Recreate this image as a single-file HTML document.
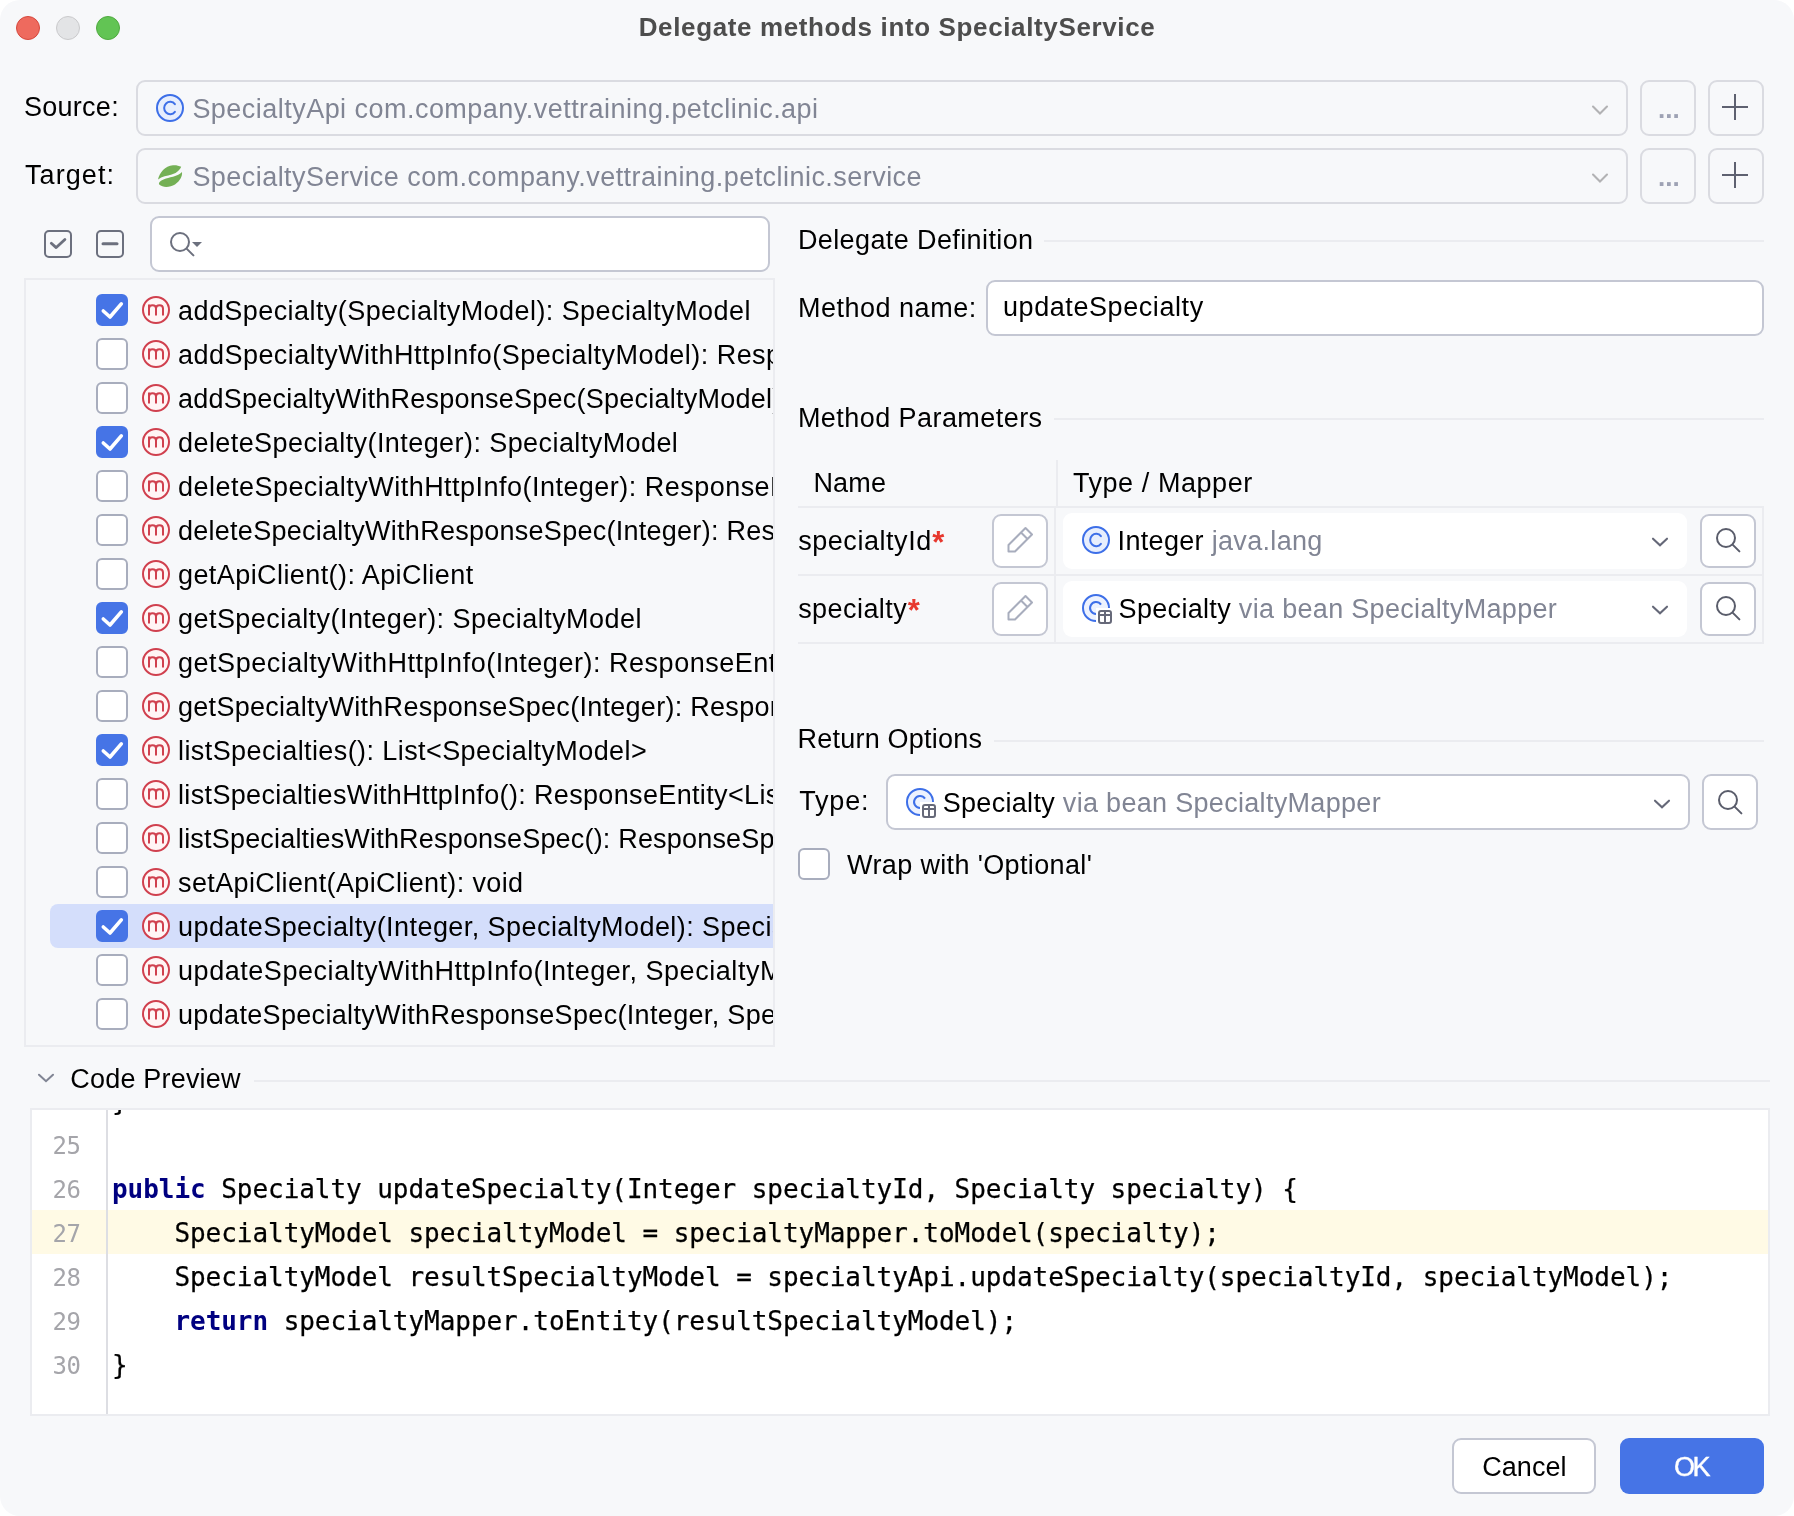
<!DOCTYPE html>
<html><head><meta charset="utf-8"><title>Delegate methods into SpecialtyService</title>
<style>
*{box-sizing:border-box;margin:0;padding:0}
html,body{width:1794px;height:1516px;background:#fff;overflow:hidden}
body{font-family:"Liberation Sans",sans-serif;font-size:27px;color:#000;position:relative}
#win{position:absolute;left:0;top:0;width:1794px;height:1516px;background:#f7f8fa;border-radius:20px;overflow:hidden}
#ly{position:absolute;left:0;top:0;width:1794px;height:1516px;will-change:transform}
.a{position:absolute;white-space:nowrap}
.t{position:absolute;white-space:nowrap;line-height:32px;height:32px}
.g{color:#818594}
.ast{color:#e7382e;font-size:31px;font-weight:bold;line-height:0;vertical-align:-2.5px;letter-spacing:0;margin-left:0.5px}
.dot{position:absolute;width:24px;height:24px;border-radius:50%;top:16px}
.combo{position:absolute;border:2px solid #dadbe1;border-radius:9px;background:#f7f8fa}
.btn{position:absolute;border:2px solid #dadbe1;border-radius:9px;background:#f7f8fa}
.wbtn{position:absolute;border:2px solid #c4c7d3;border-radius:9px;background:#fff}
.field{position:absolute;border:2px solid #c4c7d3;border-radius:9px;background:#fff}
.hl{position:absolute;height:2px;background:#ebecf0}
.vl{position:absolute;width:2px;background:#ebecf0}
svg{position:absolute;overflow:visible}
.row{position:absolute;left:0;width:750px;height:44px}
.sel{position:absolute;left:26px;top:0;width:730px;height:44px;background:#d4defb;border-radius:8px 0 0 8px}
.cb{position:absolute;left:72px;top:6px;width:32px;height:32px;border-radius:6px;border:2px solid #a8adbd;background:#fff}
.cb.on{background:#4674e6;border-color:#4674e6}
.row .t{left:154px;top:7px}
.mono{font-family:"DejaVu Sans Mono","Liberation Mono",monospace;font-size:26px}
.ln{position:absolute;left:0;width:48.8px;text-align:right;color:#a5a5aa;line-height:44px;height:44px;font-size:24px;letter-spacing:-0.25px;margin-top:1px}
.cl{position:absolute;left:80px;line-height:44px;height:44px;white-space:pre;color:#000;letter-spacing:-0.05px;-webkit-text-stroke:0.25px #000}
.kw{color:#000080;font-weight:bold;-webkit-text-stroke:0}
</style></head><body>
<div id="win"><div id="ly">
<div class="dot" style="left:16px;background:#ee6a5e;border:1px solid #d5473c"></div>
<div class="dot" style="left:56px;background:#e3e4e6;border:1px solid #c9c9cb"></div>
<div class="dot" style="left:96px;background:#62c454;border:1px solid #4fa93f"></div>
<div class="t" id="title" style="left:638.7px;top:11px;font-weight:bold;font-size:26px;color:#4d4d4d;letter-spacing:0.63px">Delegate methods into SpecialtyService</div>

<div class="t" id="lsrc" style="left:24.0px;top:91px;;letter-spacing:0.267px">Source:</div>
<div class="combo" style="left:136px;top:80px;width:1492px;height:56px"></div>
<svg style="left:154px;top:92px" width="32" height="32" viewBox="0 0 32 32"><circle cx="16" cy="16" r="13" fill="#e7eefd" stroke="#3d6fe8" stroke-width="2"/><path d="M20.9 12.2A6 6.2 0 1 0 20.9 19.8" fill="none" stroke="#3d6fe8" stroke-width="2" stroke-linecap="round"/></svg>
<div class="t g" id="tsrc" style="left:192.4px;top:92.5px;;letter-spacing:0.467px">SpecialtyApi com.company.vettraining.petclinic.api</div>
<svg style="left:1590px;top:100px" width="20" height="20" viewBox="0 0 20 20"><path d="M3 6.5L10 13.5L17 6.5" fill="none" stroke="#b2b2b4" stroke-width="2.1" stroke-linecap="round" stroke-linejoin="miter"/></svg>
<div class="btn" style="left:1640px;top:80px;width:56px;height:56px"></div>
<div class="t" id="d1" style="left:1658px;top:93px;font-weight:bold;font-size:26px;color:#9ea2b4">...</div>
<div class="btn" style="left:1708px;top:80px;width:56px;height:56px"></div>
<svg style="left:1719px;top:91px" width="32" height="32" viewBox="0 0 32 32"><path d="M16 3V29M3 16H29" stroke="#5e6170" stroke-width="2" fill="none"/></svg>
<div class="t" id="ltgt" style="left:25.0px;top:159px;;letter-spacing:1.083px">Target:</div>
<div class="combo" style="left:136px;top:148px;width:1492px;height:56px"></div>
<svg style="left:154px;top:160px" width="32" height="32" viewBox="0 0 32 32"><path d="M4 19.4C5.5 13 11 5.5 19 5.2C22 5 25 5.6 27.2 6.8C25 11.5 21 13.6 17.7 14.6C13 16 8 16.5 4 19.4Z" fill="#74b055"/><path d="M5 23C7 19.5 12 18.3 19 16.7C23 15.7 26 14.3 28 12C28.6 16 26 21 21 24.5C16 27.5 9 28 5.2 24.6C4.9 24 4.9 23.5 5 23Z" fill="#74b055"/></svg>
<div class="t g" id="ttgt" style="left:192.4px;top:160.5px;;letter-spacing:0.454px">SpecialtyService com.company.vettraining.petclinic.service</div>
<svg style="left:1590px;top:168px" width="20" height="20" viewBox="0 0 20 20"><path d="M3 6.5L10 13.5L17 6.5" fill="none" stroke="#b2b2b4" stroke-width="2.1" stroke-linecap="round" stroke-linejoin="miter"/></svg>
<div class="btn" style="left:1640px;top:148px;width:56px;height:56px"></div>
<div class="t" id="d2" style="left:1658px;top:161px;font-weight:bold;font-size:26px;color:#9ea2b4">...</div>
<div class="btn" style="left:1708px;top:148px;width:56px;height:56px"></div>
<svg style="left:1719px;top:159px" width="32" height="32" viewBox="0 0 32 32"><path d="M16 3V29M3 16H29" stroke="#5e6170" stroke-width="2" fill="none"/></svg>

<svg style="left:44px;top:230px" width="28" height="28" viewBox="0 0 28 28"><rect x="1" y="1" width="26" height="26" rx="4" fill="none" stroke="#6c707e" stroke-width="2"/><path d="M7.3 13.3L12.2 17.6L20.9 9.5" fill="none" stroke="#6c707e" stroke-width="2.8" stroke-linecap="round" stroke-linejoin="round"/></svg>
<svg style="left:96px;top:230px" width="28" height="28" viewBox="0 0 28 28"><rect x="1" y="1" width="26" height="26" rx="4" fill="none" stroke="#6c707e" stroke-width="2"/><path d="M7 13.8H21" fill="none" stroke="#6c707e" stroke-width="3" stroke-linecap="round"/></svg>
<div class="field" style="left:150px;top:216px;width:620px;height:56px"></div>
<svg style="left:164px;top:226px" width="40" height="40" viewBox="0 0 40 40"><circle cx="16" cy="16" r="9" fill="none" stroke="#6c707e" stroke-width="2"/><path d="M22.6 22.6L29.4 29.4" stroke="#6c707e" stroke-width="2" stroke-linecap="round"/></svg>
<svg style="left:192px;top:242px" width="10" height="5" viewBox="0 0 10 5"><path d="M0 0H10L5 5Z" fill="#6c707e"/></svg>

<div id="list" class="a" style="left:24px;top:278px;width:751px;height:769px;border:2px solid #ebecf0;overflow:hidden">
<div id="rows" class="a" style="left:-2px;top:8px;width:751px">
<div class="row" style="top:0px"><div class="cb on"></div><svg style="left:72px;top:6px" width="32" height="32" viewBox="0 0 32 32"><path d="M7.3 17L14 23L25.3 9.9" fill="none" stroke="#fff" stroke-width="3.6" stroke-linecap="round" stroke-linejoin="round"/></svg><svg style="left:116px;top:6px" width="32" height="32" viewBox="0 0 32 32"><circle cx="16" cy="16" r="13" fill="#fff5f5" stroke="#d0404e" stroke-width="2"/><path d="M9 21.5V10.5M9 14.5C9 10 16 10 16 14.5V21.5M16 14.5C16 10 23 10 23 14.5V21.5" fill="none" stroke="#d0404e" stroke-width="2"/></svg><div class="t" id="r0" style="left:154.0px;letter-spacing:0.433px">addSpecialty(SpecialtyModel): SpecialtyModel</div></div>
<div class="row" style="top:44px"><div class="cb"></div><svg style="left:116px;top:6px" width="32" height="32" viewBox="0 0 32 32"><circle cx="16" cy="16" r="13" fill="#fff5f5" stroke="#d0404e" stroke-width="2"/><path d="M9 21.5V10.5M9 14.5C9 10 16 10 16 14.5V21.5M16 14.5C16 10 23 10 23 14.5V21.5" fill="none" stroke="#d0404e" stroke-width="2"/></svg><div class="t" id="r1" style="left:154.0px;letter-spacing:0.463px">addSpecialtyWithHttpInfo(SpecialtyModel): ResponseEntity&lt;SpecialtyModel&gt;</div></div>
<div class="row" style="top:88px"><div class="cb"></div><svg style="left:116px;top:6px" width="32" height="32" viewBox="0 0 32 32"><circle cx="16" cy="16" r="13" fill="#fff5f5" stroke="#d0404e" stroke-width="2"/><path d="M9 21.5V10.5M9 14.5C9 10 16 10 16 14.5V21.5M16 14.5C16 10 23 10 23 14.5V21.5" fill="none" stroke="#d0404e" stroke-width="2"/></svg><div class="t" id="r2" style="left:154.0px;letter-spacing:0.241px">addSpecialtyWithResponseSpec(SpecialtyModel): ResponseSpec</div></div>
<div class="row" style="top:132px"><div class="cb on"></div><svg style="left:72px;top:6px" width="32" height="32" viewBox="0 0 32 32"><path d="M7.3 17L14 23L25.3 9.9" fill="none" stroke="#fff" stroke-width="3.6" stroke-linecap="round" stroke-linejoin="round"/></svg><svg style="left:116px;top:6px" width="32" height="32" viewBox="0 0 32 32"><circle cx="16" cy="16" r="13" fill="#fff5f5" stroke="#d0404e" stroke-width="2"/><path d="M9 21.5V10.5M9 14.5C9 10 16 10 16 14.5V21.5M16 14.5C16 10 23 10 23 14.5V21.5" fill="none" stroke="#d0404e" stroke-width="2"/></svg><div class="t" id="r3" style="left:154.0px;letter-spacing:0.426px">deleteSpecialty(Integer): SpecialtyModel</div></div>
<div class="row" style="top:176px"><div class="cb"></div><svg style="left:116px;top:6px" width="32" height="32" viewBox="0 0 32 32"><circle cx="16" cy="16" r="13" fill="#fff5f5" stroke="#d0404e" stroke-width="2"/><path d="M9 21.5V10.5M9 14.5C9 10 16 10 16 14.5V21.5M16 14.5C16 10 23 10 23 14.5V21.5" fill="none" stroke="#d0404e" stroke-width="2"/></svg><div class="t" id="r4" style="left:154.0px;letter-spacing:0.474px">deleteSpecialtyWithHttpInfo(Integer): ResponseEntity&lt;SpecialtyModel&gt;</div></div>
<div class="row" style="top:220px"><div class="cb"></div><svg style="left:116px;top:6px" width="32" height="32" viewBox="0 0 32 32"><circle cx="16" cy="16" r="13" fill="#fff5f5" stroke="#d0404e" stroke-width="2"/><path d="M9 21.5V10.5M9 14.5C9 10 16 10 16 14.5V21.5M16 14.5C16 10 23 10 23 14.5V21.5" fill="none" stroke="#d0404e" stroke-width="2"/></svg><div class="t" id="r5" style="left:154.0px;letter-spacing:0.265px">deleteSpecialtyWithResponseSpec(Integer): ResponseSpec</div></div>
<div class="row" style="top:264px"><div class="cb"></div><svg style="left:116px;top:6px" width="32" height="32" viewBox="0 0 32 32"><circle cx="16" cy="16" r="13" fill="#fff5f5" stroke="#d0404e" stroke-width="2"/><path d="M9 21.5V10.5M9 14.5C9 10 16 10 16 14.5V21.5M16 14.5C16 10 23 10 23 14.5V21.5" fill="none" stroke="#d0404e" stroke-width="2"/></svg><div class="t" id="r6" style="left:154.0px;letter-spacing:0.417px">getApiClient(): ApiClient</div></div>
<div class="row" style="top:308px"><div class="cb on"></div><svg style="left:72px;top:6px" width="32" height="32" viewBox="0 0 32 32"><path d="M7.3 17L14 23L25.3 9.9" fill="none" stroke="#fff" stroke-width="3.6" stroke-linecap="round" stroke-linejoin="round"/></svg><svg style="left:116px;top:6px" width="32" height="32" viewBox="0 0 32 32"><circle cx="16" cy="16" r="13" fill="#fff5f5" stroke="#d0404e" stroke-width="2"/><path d="M9 21.5V10.5M9 14.5C9 10 16 10 16 14.5V21.5M16 14.5C16 10 23 10 23 14.5V21.5" fill="none" stroke="#d0404e" stroke-width="2"/></svg><div class="t" id="r7" style="left:154.0px;letter-spacing:0.45px">getSpecialty(Integer): SpecialtyModel</div></div>
<div class="row" style="top:352px"><div class="cb"></div><svg style="left:116px;top:6px" width="32" height="32" viewBox="0 0 32 32"><circle cx="16" cy="16" r="13" fill="#fff5f5" stroke="#d0404e" stroke-width="2"/><path d="M9 21.5V10.5M9 14.5C9 10 16 10 16 14.5V21.5M16 14.5C16 10 23 10 23 14.5V21.5" fill="none" stroke="#d0404e" stroke-width="2"/></svg><div class="t" id="r8" style="left:154.0px;letter-spacing:0.524px">getSpecialtyWithHttpInfo(Integer): ResponseEntity&lt;SpecialtyModel&gt;</div></div>
<div class="row" style="top:396px"><div class="cb"></div><svg style="left:116px;top:6px" width="32" height="32" viewBox="0 0 32 32"><circle cx="16" cy="16" r="13" fill="#fff5f5" stroke="#d0404e" stroke-width="2"/><path d="M9 21.5V10.5M9 14.5C9 10 16 10 16 14.5V21.5M16 14.5C16 10 23 10 23 14.5V21.5" fill="none" stroke="#d0404e" stroke-width="2"/></svg><div class="t" id="r9" style="left:154.0px;letter-spacing:0.283px">getSpecialtyWithResponseSpec(Integer): ResponseSpec</div></div>
<div class="row" style="top:440px"><div class="cb on"></div><svg style="left:72px;top:6px" width="32" height="32" viewBox="0 0 32 32"><path d="M7.3 17L14 23L25.3 9.9" fill="none" stroke="#fff" stroke-width="3.6" stroke-linecap="round" stroke-linejoin="round"/></svg><svg style="left:116px;top:6px" width="32" height="32" viewBox="0 0 32 32"><circle cx="16" cy="16" r="13" fill="#fff5f5" stroke="#d0404e" stroke-width="2"/><path d="M9 21.5V10.5M9 14.5C9 10 16 10 16 14.5V21.5M16 14.5C16 10 23 10 23 14.5V21.5" fill="none" stroke="#d0404e" stroke-width="2"/></svg><div class="t" id="r10" style="left:154.0px;letter-spacing:0.408px">listSpecialties(): List&lt;SpecialtyModel&gt;</div></div>
<div class="row" style="top:484px"><div class="cb"></div><svg style="left:116px;top:6px" width="32" height="32" viewBox="0 0 32 32"><circle cx="16" cy="16" r="13" fill="#fff5f5" stroke="#d0404e" stroke-width="2"/><path d="M9 21.5V10.5M9 14.5C9 10 16 10 16 14.5V21.5M16 14.5C16 10 23 10 23 14.5V21.5" fill="none" stroke="#d0404e" stroke-width="2"/></svg><div class="t" id="r11" style="left:154.0px;letter-spacing:0.349px">listSpecialtiesWithHttpInfo(): ResponseEntity&lt;List&lt;SpecialtyModel&gt;&gt;</div></div>
<div class="row" style="top:528px"><div class="cb"></div><svg style="left:116px;top:6px" width="32" height="32" viewBox="0 0 32 32"><circle cx="16" cy="16" r="13" fill="#fff5f5" stroke="#d0404e" stroke-width="2"/><path d="M9 21.5V10.5M9 14.5C9 10 16 10 16 14.5V21.5M16 14.5C16 10 23 10 23 14.5V21.5" fill="none" stroke="#d0404e" stroke-width="2"/></svg><div class="t" id="r12" style="left:154.0px;letter-spacing:0.187px">listSpecialtiesWithResponseSpec(): ResponseSpec</div></div>
<div class="row" style="top:572px"><div class="cb"></div><svg style="left:116px;top:6px" width="32" height="32" viewBox="0 0 32 32"><circle cx="16" cy="16" r="13" fill="#fff5f5" stroke="#d0404e" stroke-width="2"/><path d="M9 21.5V10.5M9 14.5C9 10 16 10 16 14.5V21.5M16 14.5C16 10 23 10 23 14.5V21.5" fill="none" stroke="#d0404e" stroke-width="2"/></svg><div class="t" id="r13" style="left:154.0px;letter-spacing:0.375px">setApiClient(ApiClient): void</div></div>
<div class="row" style="top:616px"><div class="sel"></div><div class="cb on"></div><svg style="left:72px;top:6px" width="32" height="32" viewBox="0 0 32 32"><path d="M7.3 17L14 23L25.3 9.9" fill="none" stroke="#fff" stroke-width="3.6" stroke-linecap="round" stroke-linejoin="round"/></svg><svg style="left:116px;top:6px" width="32" height="32" viewBox="0 0 32 32"><circle cx="16" cy="16" r="13" fill="#fff5f5" stroke="#d0404e" stroke-width="2"/><path d="M9 21.5V10.5M9 14.5C9 10 16 10 16 14.5V21.5M16 14.5C16 10 23 10 23 14.5V21.5" fill="none" stroke="#d0404e" stroke-width="2"/></svg><div class="t" id="r14" style="left:154.0px;letter-spacing:0.436px">updateSpecialty(Integer, SpecialtyModel): SpecialtyModel</div></div>
<div class="row" style="top:660px"><div class="cb"></div><svg style="left:116px;top:6px" width="32" height="32" viewBox="0 0 32 32"><circle cx="16" cy="16" r="13" fill="#fff5f5" stroke="#d0404e" stroke-width="2"/><path d="M9 21.5V10.5M9 14.5C9 10 16 10 16 14.5V21.5M16 14.5C16 10 23 10 23 14.5V21.5" fill="none" stroke="#d0404e" stroke-width="2"/></svg><div class="t" id="r15" style="left:154.0px;letter-spacing:0.547px">updateSpecialtyWithHttpInfo(Integer, SpecialtyModel): ResponseEntity&lt;SpecialtyModel&gt;</div></div>
<div class="row" style="top:704px"><div class="cb"></div><svg style="left:116px;top:6px" width="32" height="32" viewBox="0 0 32 32"><circle cx="16" cy="16" r="13" fill="#fff5f5" stroke="#d0404e" stroke-width="2"/><path d="M9 21.5V10.5M9 14.5C9 10 16 10 16 14.5V21.5M16 14.5C16 10 23 10 23 14.5V21.5" fill="none" stroke="#d0404e" stroke-width="2"/></svg><div class="t" id="r16" style="left:154.0px;letter-spacing:0.329px">updateSpecialtyWithResponseSpec(Integer, SpecialtyModel): ResponseSpec</div></div>
</div></div>

<div class="t" id="h1" style="left:797.9px;top:224px;;letter-spacing:0.394px">Delegate Definition</div>
<div class="hl" style="left:1044px;top:240px;width:720px"></div>
<div class="t" id="lmn" style="left:797.9px;top:292px;;letter-spacing:0.518px">Method name:</div>
<div class="field" style="left:986px;top:280px;width:778px;height:56px"></div>
<div class="t" id="tmn" style="left:1003.0px;top:291px;;letter-spacing:0.571px">updateSpecialty</div>
<div class="t" id="h2" style="left:797.9px;top:402px;;letter-spacing:0.444px">Method Parameters</div>
<div class="hl" style="left:1054px;top:418px;width:710px"></div>

<div class="t" id="thn" style="left:813.4px;top:467px;;letter-spacing:0.2px">Name</div>
<div class="t" id="tht" style="left:1072.9px;top:467px;;letter-spacing:0.567px">Type / Mapper</div>
<div class="vl" style="left:1056px;top:460px;height:46px"></div>
<div class="hl" style="left:798px;top:506px;width:966px"></div>
<div class="hl" style="left:798px;top:574px;width:966px"></div>
<div class="hl" style="left:798px;top:642px;width:966px"></div>
<div class="vl" style="left:1054px;top:506px;height:138px"></div>
<div class="vl" style="left:1762px;top:506px;height:138px"></div>

<div class="t" id="p1" style="left:798.2px;top:525px;;letter-spacing:0.545px">specialtyId<span class="ast">*</span></div>
<div class="wbtn" style="left:992px;top:514px;width:56px;height:54px"></div>
<svg style="left:1004px;top:523.5px" width="32" height="32" viewBox="0 0 32 32"><path d="M4.5 27.5V21L21.5 4L28 10.5L11 27.5Z M17 8.5L23.5 15" fill="none" stroke="#a8adbd" stroke-width="2" stroke-linejoin="round"/></svg>
<div class="a" style="left:1063px;top:513px;width:624px;height:56px;background:#fff;border-radius:9px"></div>
<svg style="left:1080px;top:524px" width="32" height="32" viewBox="0 0 32 32"><circle cx="16" cy="16" r="13" fill="#e7eefd" stroke="#3d6fe8" stroke-width="2"/><path d="M20.9 12.2A6 6.2 0 1 0 20.9 19.8" fill="none" stroke="#3d6fe8" stroke-width="2" stroke-linecap="round"/></svg>
<div class="t" id="c1" style="left:1117.6px;top:525px;;letter-spacing:0.319px">Integer <span class="g">java.lang</span></div>
<svg style="left:1650px;top:532px" width="20" height="20" viewBox="0 0 20 20"><path d="M3 6.7L10 13.3L17 6.7" fill="none" stroke="#656878" stroke-width="2.1" stroke-linecap="round" stroke-linejoin="miter"/></svg>
<div class="wbtn" style="left:1700px;top:514px;width:56px;height:54px"></div>
<svg style="left:1710px;top:522px" width="40" height="40" viewBox="0 0 40 40"><circle cx="16" cy="16" r="9" fill="none" stroke="#5a5d6b" stroke-width="2"/><path d="M22.6 22.6L29.4 29.4" stroke="#5a5d6b" stroke-width="2" stroke-linecap="round"/></svg>

<div class="t" id="p2" style="left:798.2px;top:593px;;letter-spacing:0.433px">specialty<span class="ast">*</span></div>
<div class="wbtn" style="left:992px;top:582px;width:56px;height:54px"></div>
<svg style="left:1004px;top:591.5px" width="32" height="32" viewBox="0 0 32 32"><path d="M4.5 27.5V21L21.5 4L28 10.5L11 27.5Z M17 8.5L23.5 15" fill="none" stroke="#a8adbd" stroke-width="2" stroke-linejoin="round"/></svg>
<div class="a" style="left:1063px;top:581px;width:624px;height:56px;background:#fff;border-radius:9px"></div>
<svg style="left:1080px;top:592px" width="32" height="32" viewBox="0 0 32 32"><path d="M16 29A13 13 0 1 1 29 16L16 16Z" fill="#edf2fe" stroke="none"/><path d="M16 29A13 13 0 1 1 29 16" fill="none" stroke="#3d6fe8" stroke-width="2"/><path d="M21 12.6A6 6 0 1 0 16 22" fill="none" stroke="#3d6fe8" stroke-width="2"/><rect x="16.6" y="16.6" width="16" height="16" rx="2" fill="#fff"/><rect x="19" y="19" width="12" height="12" rx="2" fill="#fff" stroke="#666979" stroke-width="2"/><path d="M19 23H31M25 19V31" stroke="#666979" stroke-width="2" fill="none"/></svg>
<div class="t" id="c2" style="left:1118.6px;top:593px;;letter-spacing:0.318px">Specialty <span class="g">via bean SpecialtyMapper</span></div>
<svg style="left:1650px;top:600px" width="20" height="20" viewBox="0 0 20 20"><path d="M3 6.7L10 13.3L17 6.7" fill="none" stroke="#656878" stroke-width="2.1" stroke-linecap="round" stroke-linejoin="miter"/></svg>
<div class="wbtn" style="left:1700px;top:582px;width:56px;height:54px"></div>
<svg style="left:1710px;top:590px" width="40" height="40" viewBox="0 0 40 40"><circle cx="16" cy="16" r="9" fill="none" stroke="#5a5d6b" stroke-width="2"/><path d="M22.6 22.6L29.4 29.4" stroke="#5a5d6b" stroke-width="2" stroke-linecap="round"/></svg>

<div class="t" id="h3" style="left:797.5px;top:723px;;letter-spacing:0.223px">Return Options</div>
<div class="hl" style="left:994px;top:740px;width:770px"></div>
<div class="t" id="lty" style="left:799.2px;top:785px;;letter-spacing:0.825px">Type:</div>
<div class="field" style="left:886px;top:774px;width:804px;height:56px"></div>
<svg style="left:904px;top:786px" width="32" height="32" viewBox="0 0 32 32"><path d="M16 29A13 13 0 1 1 29 16L16 16Z" fill="#edf2fe" stroke="none"/><path d="M16 29A13 13 0 1 1 29 16" fill="none" stroke="#3d6fe8" stroke-width="2"/><path d="M21 12.6A6 6 0 1 0 16 22" fill="none" stroke="#3d6fe8" stroke-width="2"/><rect x="16.6" y="16.6" width="16" height="16" rx="2" fill="#fff"/><rect x="19" y="19" width="12" height="12" rx="2" fill="#fff" stroke="#666979" stroke-width="2"/><path d="M19 23H31M25 19V31" stroke="#666979" stroke-width="2" fill="none"/></svg>
<div class="t" id="c3" style="left:942.7px;top:787px;;letter-spacing:0.309px">Specialty <span class="g">via bean SpecialtyMapper</span></div>
<svg style="left:1652px;top:794px" width="20" height="20" viewBox="0 0 20 20"><path d="M3 6.7L10 13.3L17 6.7" fill="none" stroke="#656878" stroke-width="2.1" stroke-linecap="round" stroke-linejoin="miter"/></svg>
<div class="wbtn" style="left:1702px;top:774px;width:56px;height:56px"></div>
<svg style="left:1712px;top:784px" width="40" height="40" viewBox="0 0 40 40"><circle cx="16" cy="16" r="9" fill="none" stroke="#5a5d6b" stroke-width="2"/><path d="M22.6 22.6L29.4 29.4" stroke="#5a5d6b" stroke-width="2" stroke-linecap="round"/></svg>
<div class="a" style="left:798px;top:848px;width:32px;height:32px;border:2px solid #a8adbd;border-radius:6px;background:#fff"></div>
<div class="t" id="lwr" style="left:847.1px;top:849px;;letter-spacing:0.358px">Wrap with 'Optional'</div>

<svg style="left:36px;top:1068px" width="20" height="20" viewBox="0 0 20 20"><path d="M3 6.8L10 13.2L17 6.8" fill="none" stroke="#818594" stroke-width="2.1" stroke-linecap="round" stroke-linejoin="miter"/></svg>
<div class="t" id="h4" style="left:70.3px;top:1063px;;letter-spacing:0.191px">Code Preview</div>
<div class="hl" style="left:254px;top:1080px;width:1516px"></div>
<div id="ed" class="a" style="left:30px;top:1108px;width:1740px;height:308px;border:2px solid #ebecf0;background:#fff;overflow:hidden">
<div class="a" style="left:0;top:100px;width:1736px;height:44px;background:#fffae5"></div>
<div class="vl" style="left:74px;top:0;height:304px;background:#dddee3"></div>
<div class="mono" id="code">
<div class="cl" style="top:-31px">}</div>
<div class="ln" style="top:13px">25</div>
<div class="cl" style="top:13px"></div>
<div class="ln" style="top:57px">26</div>
<div class="cl" style="top:57px"><span class="kw">public</span> Specialty updateSpecialty(Integer specialtyId, Specialty specialty) {</div>
<div class="ln" style="top:101px">27</div>
<div class="cl" style="top:101px">    SpecialtyModel specialtyModel = specialtyMapper.toModel(specialty);</div>
<div class="ln" style="top:145px">28</div>
<div class="cl" style="top:145px">    SpecialtyModel resultSpecialtyModel = specialtyApi.updateSpecialty(specialtyId, specialtyModel);</div>
<div class="ln" style="top:189px">29</div>
<div class="cl" style="top:189px">    <span class="kw">return</span> specialtyMapper.toEntity(resultSpecialtyModel);</div>
<div class="ln" style="top:233px">30</div>
<div class="cl" style="top:233px">}</div>
</div></div>

<div class="a" style="left:1452px;top:1438px;width:144px;height:56px;border:2px solid #c4c7d3;border-radius:9px;background:#fff"></div>
<div class="t" id="bc" style="left:1482.2px;top:1451px;;letter-spacing:0.06px">Cancel</div>
<div class="a" style="left:1620px;top:1438px;width:144px;height:56px;border-radius:9px;background:#4674e6"></div>
<div class="t" id="bo" style="left:1673.9px;top:1451px;color:#fff;-webkit-text-stroke:0.4px #fff;letter-spacing:-2.3px">OK</div>
</div></div>
</body></html>
